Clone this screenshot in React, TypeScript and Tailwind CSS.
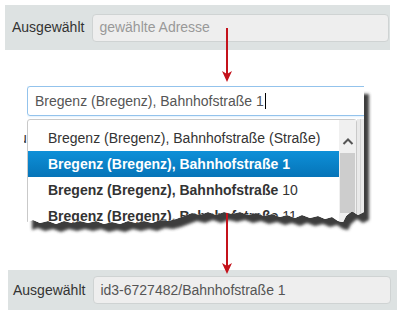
import React from "react";

// torn bottom edge of the dropdown snapshot, in wrapper coords (337 x 139)
const edge: [number, number][] = [
    [337, 126], [331, 129], [325, 125], [319, 130], [316, 136], [311, 135], [305, 131],
    [298, 133], [291, 130], [283, 132], [275, 129], [268, 132], [260, 129], [253, 131],
    [245, 128], [237, 130], [229, 127], [221, 129], [213, 126], [205, 128], [197, 126],
    [189, 129], [181, 126], [173, 129], [165, 127], [157, 130], [149, 133], [141, 135],
    [133, 134], [125, 137], [117, 135], [109, 137], [101, 135], [93, 138], [85, 136],
    [77, 138], [69, 135], [61, 137], [53, 135], [45, 137], [37, 135], [29, 138],
    [21, 135], [13, 137], [6, 134], [0, 136],
];
const torn = "M0,0 H337 V126 " + edge.map(([x, y]) => `L${x},${y}`).join(" ") + " Z";

function Arrow({ className, height }: { className: string; height: number }) {
    return (
        <svg className={className} width="10" height={height} viewBox={`0 0 10 ${height}`}>
            <line x1="5" y1="0" x2="5" y2={height - 6} stroke="#c4121b" strokeWidth="2" />
            <path d={`M0,${height - 11} L5,${height} L10,${height - 11} L5,${height - 8} Z`} fill="#c4121b" />
        </svg>
    );
}

export default function App() {
    return (
        <div className="relative h-[317px] w-[402px] overflow-hidden bg-white font-['Liberation_Sans',Arial,sans-serif] text-[14px] text-[#333]">
            {/* oben: leeres Feld */}
            <div className="ml-[5px] mt-[5px] flex h-[45px] w-[385px] items-center gap-[8px] bg-[#dde2e2] pl-[7px] pr-[1px]">
                <span>Ausgewählt</span>
                <div className="flex h-[28px] flex-1 items-center rounded-[4px] border border-[#cfd3d3] bg-[#eeeeee] pl-[6px] text-[#999]">
                    gewählte Adresse
                </div>
            </div>

            {/* Ausschnitt: Autocomplete */}
            <div className="relative ml-[27px] mt-[36px] h-[139px] w-[337px]">
                <svg className="absolute left-0 top-0 overflow-visible" width="350" height="155">
                    <defs>
                        <clipPath id="torn" clipPathUnits="userSpaceOnUse">
                            <path d={torn} />
                        </clipPath>
                        <filter id="soft" x="-10%" y="-10%" width="120%" height="130%">
                            <feGaussianBlur stdDeviation="1.8" />
                        </filter>
                    </defs>
                    <path d={torn} transform="translate(5,8)" fill="#3e3e3e" filter="url(#soft)" />
                </svg>
                <span className="absolute left-[-3px] top-[44px] w-[3px] overflow-hidden leading-[16px]">
                    <span className="ml-[-5px] block">u</span>
                </span>

                <div className="relative z-10 h-[139px] w-[337px] overflow-hidden bg-white [clip-path:url(#torn)]">
                    <div className="flex h-[30px] w-[345px] items-center rounded-[3px] border border-[#93c3ec] pl-[7px] text-[#555] shadow-[0_0_3px_#c2def5]">
                        Bregenz (Bregenz), Bahnhofstraße 1
                        <span className="ml-[1px] inline-block h-[16px] w-px bg-black" />
                    </div>
                    <div className="mt-[3px] flex">
                        <div className="flex w-[330px] rounded-t-[3px] border border-[#c9c9c9] bg-white">
                            <div className="flex-1 pt-[5px]">
                                <div className="flex h-[26px] items-center pl-[20px]">
                                    Bregenz (Bregenz), Bahnhofstraße (Straße)
                                </div>
                                <div className="flex h-[26px] items-center bg-gradient-to-b from-[#0e90d8] to-[#0674b8] pl-[20px] font-bold text-white">
                                    Bregenz (Bregenz), Bahnhofstraße 1
                                </div>
                                <div className="flex h-[26px] items-center pl-[20px]">
                                    <b>Bregenz (Bregenz), Bahnhofstraße</b>&nbsp;10
                                </div>
                                <div className="flex h-[26px] items-center pl-[20px]">
                                    <b>Bregenz (Bregenz), Bahnhofstraße</b>&nbsp;11
                                </div>
                            </div>
                            <div className="flex w-[17px] flex-col items-center bg-[#f0f0f0]">
                                <svg className="mt-[17px]" width="12" height="8" viewBox="0 0 12 8">
                                    <path d="M1.5,7 L6,2.5 L10.5,7" fill="none" stroke="#555" strokeWidth="2" />
                                </svg>
                                <div className="mt-[8px] h-[60px] w-[15px] bg-[#cdcdcd]" />
                            </div>
                        </div>
                        <div className="flex w-[7px] justify-center bg-[#e9e9e9]">
                            <div className="h-full w-px bg-[#d3d3d3]" />
                        </div>
                    </div>
                </div>
            </div>

            {/* unten: übernommener Wert */}
            <div className="ml-[8px] mt-[45px] flex h-[40px] w-[389px] items-center gap-[8px] bg-[#dde2e2] pl-[5px] pr-[6px]">
                <span>Ausgewählt</span>
                <div className="flex h-[28px] flex-1 items-center rounded-[4px] border border-[#cfd3d3] bg-[#eeeeee] pl-[6px] text-[#555]">
                    id3-6727482/Bahnhofstraße 1
                </div>
            </div>

            <Arrow className="absolute left-[222px] top-[28px]" height={54} />
            <Arrow className="absolute left-[222px] top-[172px]" height={102} />
        </div>
    );
}
